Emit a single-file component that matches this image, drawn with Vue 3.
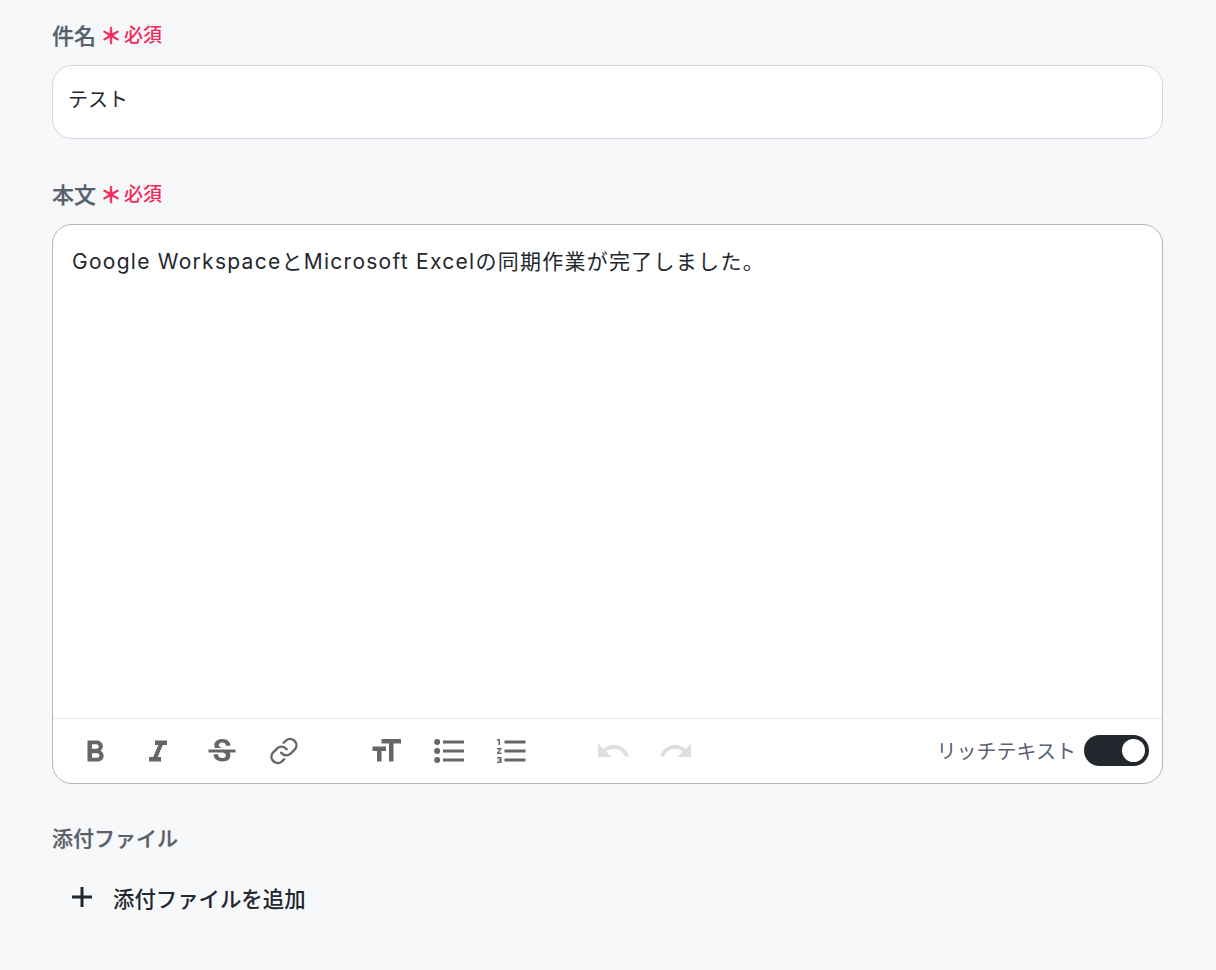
<script setup>
const required = '必須'
const group1 = [
  { n: 'b', vb: '0 -1 24 24', d: 'M15.6 10.79c.97-.67 1.65-1.77 1.65-2.79 0-2.26-1.75-4-4-4H7v14h7.04c2.09 0 3.71-1.7 3.71-3.79 0-1.52-.86-2.82-2.15-3.42zM10 6.5h3c.83 0 1.5.67 1.5 1.5s-.67 1.5-1.5 1.5h-3v-3zm3.5 9H10v-3h3.5c.83 0 1.5.67 1.5 1.5s-.67 1.5-1.5 1.5z' },
  { n: 'i', vb: '0 -1 24 24', d: 'M10 4v3h2.21l-3.42 8H6v3h8v-3h-2.21l3.42-8H18V4z' },
  { n: 's', vb: '0 -1 24 24', d: 'M7.24 8.75c-.26-.48-.39-1.03-.39-1.67 0-.61.13-1.16.4-1.67.26-.5.63-.93 1.11-1.29.48-.35 1.05-.63 1.7-.83.66-.19 1.39-.29 2.18-.29.81 0 1.54.11 2.21.34.66.22 1.23.54 1.69.94.47.4.83.88 1.08 1.43.25.55.38 1.15.38 1.81h-3.01c0-.31-.05-.59-.15-.85-.09-.27-.24-.49-.44-.68-.2-.19-.45-.33-.75-.44-.3-.1-.66-.16-1.06-.16-.39 0-.74.04-1.03.13-.29.09-.53.21-.72.36-.19.16-.34.34-.44.55-.1.21-.15.43-.15.66 0 .48.25.88.74 1.21.38.25.77.48 1.41.7H7.39c-.05-.08-.11-.17-.15-.25zM21 12v-2H3v2h9.62c.18.07.4.14.55.2.37.17.66.34.87.51.21.17.35.36.43.57.07.2.11.43.11.69 0 .23-.05.45-.14.66-.09.2-.23.38-.42.53-.19.15-.42.26-.71.35-.29.08-.63.13-1.01.13-.43 0-.83-.04-1.18-.13s-.66-.23-.91-.42c-.25-.19-.45-.44-.59-.75-.14-.31-.25-.76-.25-1.21H6.4c0 .55.08 1.13.24 1.58.16.45.37.85.65 1.21.28.35.6.66.98.92.37.26.78.48 1.22.65.44.17.9.3 1.38.39.48.08.96.13 1.44.13.8 0 1.53-.09 2.18-.28s1.21-.45 1.67-.79c.46-.34.82-.77 1.07-1.27s.38-1.07.38-1.71c0-.6-.1-1.14-.31-1.61-.05-.11-.11-.23-.17-.33H21z' }
]
const group2 = [
  { n: 'size', vb: '0 0 24 24', d: 'M9 4v3h5v12h3V7h5V4H9zm-6 8h3v7h3v-7h3V9H3v3z' },
  { n: 'ul', vb: '0 0 24 24', d: 'M4.1 4a2 2 0 1 0 0 4 2 2 0 0 0 0-4zm0 6a2 2 0 1 0 0 4 2 2 0 0 0 0-4zm0 6a2 2 0 1 0 0 4 2 2 0 0 0 0-4zM8 5h14v2H8zm0 6h14v2H8zm0 6h14v2H8z' },
  { n: 'ol', vb: '0 0 24 24', d: 'M2 17h2v.5H3v1h1v.5H2v1h3v-4H2v1zm1-9h1V4H2v1h1v3zm-1 3h1.8L2 13.1v.9h3v-1H3.2L5 10.9V10H2v1zm5-6v2h14V5H7zm0 14h14v-2H7v2zm0-6h14v-2H7v2z' }
]
const group3 = [
  { n: 'undo', vb: '0 0 24 24', d: 'M12.5 8c-2.65 0-5.05.99-6.9 2.6L2 7v9h9l-3.62-3.62c1.39-1.16 3.16-1.88 5.12-1.88 3.54 0 6.55 2.31 7.6 5.5l2.37-.78C21.08 11.03 17.15 8 12.5 8z' },
  { n: 'redo', vb: '0 0 24 24', d: 'M18.4 10.6C16.55 8.99 14.15 8 11.5 8c-4.65 0-8.58 3.03-9.96 7.22L3.9 16c1.05-3.19 4.05-5.5 7.6-5.5 1.95 0 3.73.72 5.12 1.88L13 16h9V7l-3.6 3.6z' }
]
</script>

<template>
  <main class="page">
    <section class="field">
      <div class="label"><span class="name">件名</span><span class="star">＊</span><span class="req">{{ required }}</span></div>
      <input class="subject" type="text" value="テスト" />
    </section>

    <section class="field">
      <div class="label"><span class="name">本文</span><span class="star">＊</span><span class="req">{{ required }}</span></div>
      <div class="editor">
        <div class="body">Google WorkspaceとMicrosoft Excelの同期作業が完了しました。</div>
        <div class="toolbar">
          <div class="group">
            <svg v-for="i in group1" :key="i.n" class="icon" :viewBox="i.vb"><path :d="i.d" /></svg>
            <svg class="icon link" viewBox="0.7 0 24 24">
              <path d="M10.2 13.2a4.2 4.2 0 0 0 6.3.5l2.9-2.9a4.2 4.2 0 0 0-5.9-5.9l-1.7 1.6M13.8 10.8a4.2 4.2 0 0 0-6.3-.5l-2.9 2.9a4.2 4.2 0 0 0 5.9 5.9l1.7-1.6" />
            </svg>
          </div>
          <div class="group">
            <svg v-for="i in group2" :key="i.n" class="icon" :viewBox="i.vb"><path :d="i.d" /></svg>
          </div>
          <div class="group off">
            <svg v-for="i in group3" :key="i.n" class="icon" :viewBox="i.vb"><path :d="i.d" /></svg>
          </div>
          <div class="rich">
            <span>リッチテキスト</span>
            <span class="switch"><span class="knob"></span></span>
          </div>
        </div>
      </div>
    </section>

    <section class="field">
      <div class="label plain">添付ファイル</div>
      <button class="add" type="button">
        <svg class="plus" viewBox="0 0 20 20"><path d="M10 0v20M0 10h20" /></svg>
        <span>添付ファイルを追加</span>
      </button>
    </section>
  </main>
</template>

<style>
html, body { margin: 0; background: #f7f8fa; }
</style>

<style scoped>
.page {
  box-sizing: border-box;
  width: 1216px;
  height: 970px;
  overflow: hidden;
  padding: 22px 53px 0 52px;
  background: #f7f8fa;
  display: flex;
  flex-direction: column;
  gap: 41px;
  font-family: Inter, "Noto Sans CJK JP", sans-serif;
  color: #23272e;
}
.field { display: flex; flex-direction: column; }
.label {
  display: flex;
  align-items: center;
  height: 28px;
  line-height: 28px;
  margin-bottom: 15px;
  font-size: 21px;
  font-weight: 500;
  -webkit-text-stroke: 0.25px currentColor;
  color: #565f6c;
  white-space: nowrap;
}
.name { font-size: 22px; }
.label.plain { color: #5a5f68; }
.star {
  width: 22px;
  margin: 0 2px 0 4px;
  text-align: center;
  color: #f02a5a;
  font-size: 22px;
  font-weight: 700;
}
.req { color: #f02a5a; font-size: 19px; font-weight: 500; -webkit-text-stroke: 0; }
.subject {
  box-sizing: border-box;
  width: 100%;
  height: 74px;
  margin-bottom: 1px;
  padding: 0 15px 8px;
  border: 1px solid #cfd8e3;
  border-radius: 20px;
  background: #fff;
  font: inherit;
  font-size: 20px;
  color: #23272e;
  outline: none;
}
.editor {
  box-sizing: border-box;
  height: 560px;
  border: 1px solid #aeb6c2;
  border-radius: 20px;
  background: #fff;
  display: flex;
  flex-direction: column;
  overflow: hidden;
}
.body {
  flex: 1;
  padding: 21px 19px 0;
  font-size: 21px;
  line-height: 32px;
  letter-spacing: 1.27px;
}
.toolbar {
  box-sizing: border-box;
  height: 65px;
  border-top: 1px solid #e9ecef;
  padding: 0 13px 0 24px;
  display: flex;
  align-items: center;
  gap: 64.5px;
}
.group { display: flex; gap: 27.4px; }
.icon { width: 36px; height: 36px; display: block; fill: #666; }
.icon.link { fill: none; stroke: #666; stroke-width: 1.6; stroke-linecap: round; }
.group.off .icon { fill: #dedede; }
.rich {
  margin-left: auto;
  margin-bottom: 2px;
  display: flex;
  align-items: center;
  gap: 8px;
  font-size: 20px;
  color: #5b6270;
}
.switch {
  box-sizing: border-box;
  width: 65px;
  height: 31px;
  border-radius: 16px;
  background: #23272e;
  display: flex;
  align-items: center;
  justify-content: flex-end;
  padding-right: 4px;
}
.knob { width: 23px; height: 23px; border-radius: 50%; background: #fff; }
.add {
  align-self: flex-start;
  margin: 9px 0 0 20px;
  padding: 0;
  height: 40px;
  border: 0;
  background: transparent;
  display: flex;
  align-items: center;
  gap: 21px;
  font: inherit;
  font-size: 21.4px;
  font-weight: 500;
  color: #23272e;
}
.plus { width: 20px; height: 20px; fill: none; stroke: #23272e; stroke-width: 3; }
</style>
